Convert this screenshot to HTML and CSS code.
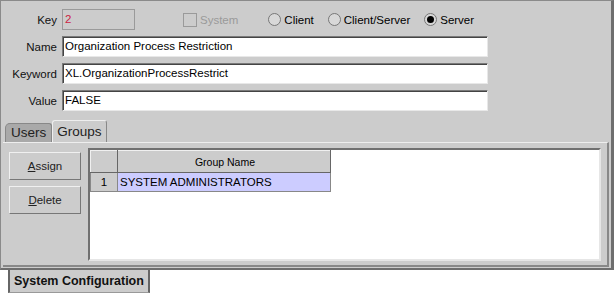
FILE: index.html
```html
<!DOCTYPE html>
<html lang="en">
<head>
    <meta charset="UTF-8">
    <title>System Configuration</title>
    <link rel="stylesheet" href="styles.css">
</head>
<body>
<div class="window">
    <div class="panel">
        <div class="form">
            <div class="row">
                <label class="label">Key</label>
                <div class="field key">2</div>
                <div class="options">
                    <span class="check"><span class="box"></span>System</span>
                    <span class="radio"><span class="dot"></span>Client</span>
                    <span class="radio"><span class="dot"></span>Client/Server</span>
                    <span class="radio on"><span class="dot"></span>Server</span>
                </div>
            </div>
            <div class="row">
                <label class="label">Name</label>
                <div class="field">Organization Process Restriction</div>
            </div>
            <div class="row">
                <label class="label">Keyword</label>
                <div class="field">XL.OrganizationProcessRestrict</div>
            </div>
            <div class="row">
                <label class="label">Value</label>
                <div class="field">FALSE</div>
            </div>
        </div>

        <div class="tabs">
            <div class="tab-strip">
                <span class="tab">Users</span>
                <span class="tab active">Groups</span>
            </div>
            <div class="tab-body">
                <div class="buttons">
                    <button><u>A</u>ssign</button>
                    <button><u>D</u>elete</button>
                </div>
                <div class="table-pane">
                    <table>
                        <tr>
                            <th class="num"></th>
                            <th class="name">Group Name</th>
                        </tr>
                        <tr>
                            <td class="num">1</td>
                            <td class="name selected">SYSTEM ADMINISTRATORS</td>
                        </tr>
                    </table>
                </div>
            </div>
        </div>
    </div>
    <div class="bottom-tabs">
        <span class="bottom-tab">System Configuration</span>
    </div>
</div>
</body>
</html>
```

FILE: styles.css
```css
body {
    margin: 0;
    background-color: #ffffff;
    font-family: 'Liberation Sans', Arial, sans-serif;
    font-size: 11.5px;
    color: #000;
}
.window {
    width: 614px;
}
.panel {
    box-sizing: border-box;
    height: 270px;
    background-color: #cccccc;
    border: 1px solid #8a8a8a;
    border-right: 3px solid #6e6e6e;
    border-bottom: 2px solid #6e6e6e;
    padding: 8px 2px 0 2px;
}
.form {
    display: flex;
    flex-direction: column;
    gap: 6px;
}
.row {
    display: flex;
    align-items: center;
    gap: 5px;
}
.label {
    width: 54px;
    text-align: right;
    color: #111;
}
.field {
    box-sizing: border-box;
    width: 426px;
    height: 21px;
    line-height: 19px;
    padding-left: 2px;
    background-color: #ffffff;
    border: 1px solid #7a7a7a;
    border-right-color: #e8e8e8;
    border-bottom-color: #e8e8e8;
    box-shadow: inset 1px 1px 0 #444;
    white-space: nowrap;
}
.field.key {
    width: 73px;
    background-color: #cccccc;
    color: #cc2244;
    box-shadow: none;
    border-color: #9a9a9a;
}
.options {
    display: flex;
    align-items: center;
    margin-left: 43px;
}
.check, .radio {
    display: flex;
    align-items: center;
    gap: 3px;
    margin-right: 14px;
}
.check {
    color: #9a9a9a;
    margin-right: 30px;
}
.box {
    width: 12px;
    height: 12px;
    border: 1px solid #9a9a9a;
}
.dot {
    box-sizing: border-box;
    width: 13px;
    height: 13px;
    border-radius: 50%;
    border: 1px solid #777;
    background-color: #d8d8d8;
    display: flex;
    align-items: center;
    justify-content: center;
}
.radio.on .dot::after {
    content: '';
    width: 7px;
    height: 7px;
    border-radius: 50%;
    background-color: #000;
}
.tabs {
    margin-top: 9px;
}
.tab-strip {
    display: flex;
    align-items: flex-end;
    padding-left: 2px;
    height: 22px;
}
.tab {
    box-sizing: border-box;
    height: 19px;
    line-height: 18px;
    padding: 0 5px;
    background-color: #a9a9a9;
    border: 1px solid #888;
    border-bottom: none;
    border-radius: 5px 3px 0 0;
    font-size: 13.5px;
    color: #222;
}
.tab.active {
    height: 22px;
    line-height: 22px;
    padding: 0 4px;
    background-color: #cccccc;
    border-color: #eeeeee;
    border-right-color: #888;
    border-radius: 3px 3px 0 0;
}
.tab-body {
    box-sizing: border-box;
    height: 125px;
    display: flex;
    gap: 7px;
    padding: 5px 6px 4px 6px;
    border-top: 1px solid #eeeeee;
    border-right: 2px solid #888;
    border-bottom: 2px solid #888;
}
.buttons {
    display: flex;
    flex-direction: column;
    gap: 6px;
    padding-top: 4px;
}
.buttons button {
    width: 72px;
    height: 28px;
    background-color: #cccccc;
    border: 1px solid #f0f0f0;
    border-right-color: #777;
    border-bottom-color: #777;
    font-family: 'Liberation Sans', Arial, sans-serif;
    font-size: 11.5px;
    color: #222;
    padding: 0;
}
.table-pane {
    flex: 1;
    background-color: #ffffff;
    border: 2px solid #707070;
    border-right-color: #e6e6e6;
    border-bottom-color: #e6e6e6;
}
table {
    border-collapse: collapse;
}
th, td {
    padding: 0 0 0 2px;
    font-weight: normal;
    white-space: nowrap;
}
th {
    height: 21px;
    background-color: #cccccc;
    border: 1px solid #f0f0f0;
    border-right-color: #666;
    border-bottom-color: #666;
    font-size: 10.5px;
}
td {
    height: 18px;
    border: 1px solid #888;
    border-top: none;
}
td.num {
    background-color: #cccccc;
    text-align: center;
    padding: 0;
}
.num {
    width: 24px;
}
.name {
    width: 210px;
}
td.selected {
    background-color: #ccccff;
}
.bottom-tabs {
    padding-left: 8px;
}
.bottom-tab {
    display: inline-block;
    height: 22px;
    line-height: 22px;
    padding: 0 4px;
    background-color: #cccccc;
    border-left: 2px solid #666;
    border-right: 2px solid #666;
    border-bottom: 1px solid #999;
    font-weight: bold;
    font-size: 12.5px;
    color: #111;
}
```
